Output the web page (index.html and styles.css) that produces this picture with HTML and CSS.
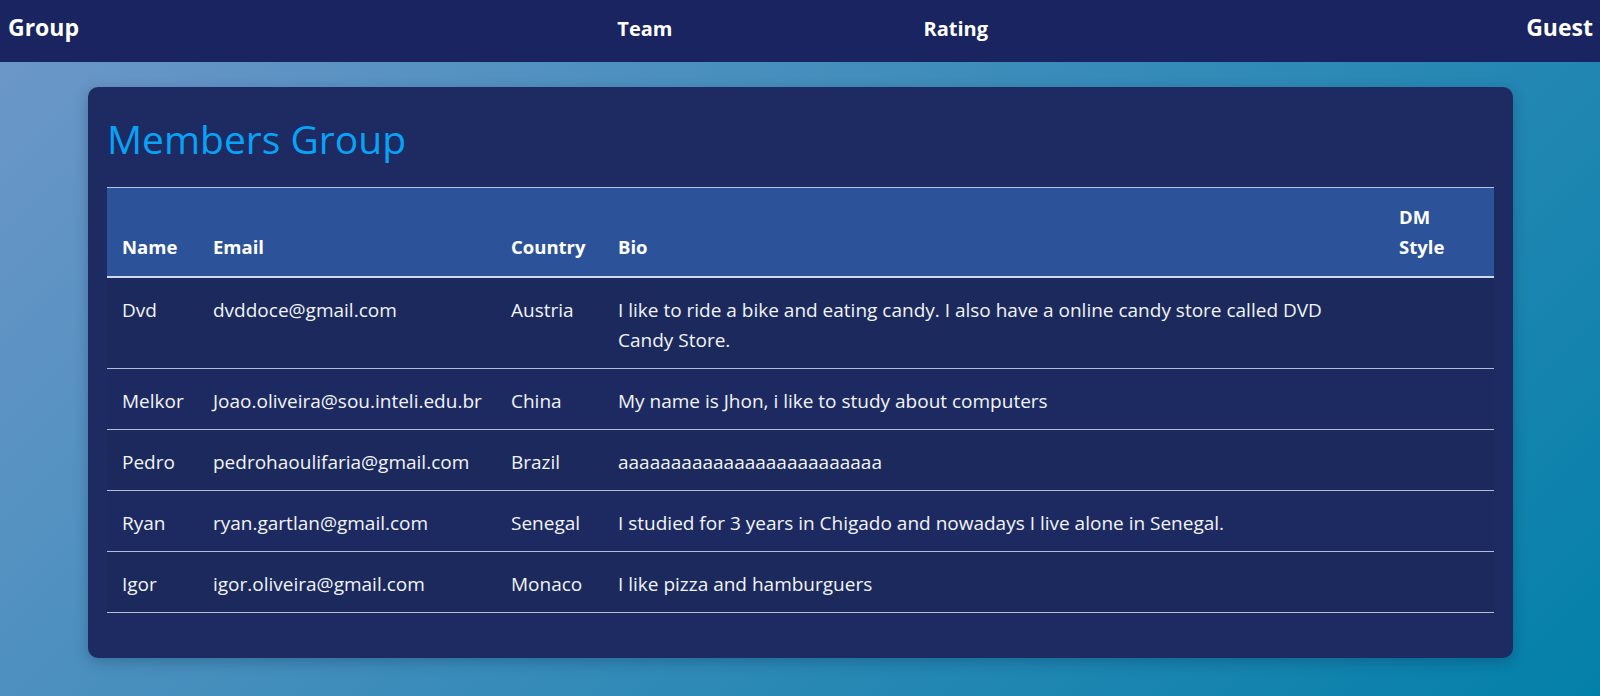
FILE: index.html
```html
<!DOCTYPE html>
<html lang="en">
<head>
<meta charset="utf-8">
<title>Members Group</title>
<link rel="stylesheet" href="styles.css">
</head>
<body>
<nav class="navbar">
  <a class="brand" href="#">Group</a>
  <ul class="nav-links">
    <li><a href="#">Team</a></li>
    <li><a href="#">Rating</a></li>
  </ul>
  <a class="user" href="#">Guest</a>
</nav>
<main class="card">
  <h1 class="title">Members Group</h1>
  <table class="members">
    <colgroup>
      <col class="c-name">
      <col class="c-email">
      <col class="c-country">
      <col class="c-bio">
      <col class="c-dm">
    </colgroup>
    <thead>
      <tr>
        <th>Name</th>
        <th>Email</th>
        <th>Country</th>
        <th>Bio</th>
        <th class="dm">DM Style</th>
      </tr>
    </thead>
    <tbody>
      <tr>
        <td>Dvd</td>
        <td>dvddoce@gmail.com</td>
        <td>Austria</td>
        <td class="bio">I like to ride a bike and eating candy. I also have a online candy store called DVD Candy Store.</td>
        <td></td>
      </tr>
      <tr>
        <td>Melkor</td>
        <td>Joao.oliveira@sou.inteli.edu.br</td>
        <td>China</td>
        <td class="bio">My name is Jhon, i like to study about computers</td>
        <td></td>
      </tr>
      <tr>
        <td>Pedro</td>
        <td>pedrohaoulifaria@gmail.com</td>
        <td>Brazil</td>
        <td class="bio">aaaaaaaaaaaaaaaaaaaaaaaaa</td>
        <td></td>
      </tr>
      <tr>
        <td>Ryan</td>
        <td>ryan.gartlan@gmail.com</td>
        <td>Senegal</td>
        <td class="bio">I studied for 3 years in Chigado and nowadays I live alone in Senegal.</td>
        <td></td>
      </tr>
      <tr>
        <td>Igor</td>
        <td>igor.oliveira@gmail.com</td>
        <td>Monaco</td>
        <td class="bio">I like pizza and hamburguers</td>
        <td></td>
      </tr>
    </tbody>
  </table>
</main>
</body>
</html>
```
FILE: styles.css
```css
* { box-sizing: border-box; }

html, body {
  margin: 0;
  padding: 0;
}

body {
  min-height: 100vh;
  font-family: "Open Sans", "Noto Sans", "Liberation Sans", sans-serif;
  color: #f2f4f8;
  background: linear-gradient(135deg, #6e97c9 0%, #0380a9 100%);
  background-attachment: fixed;
}

a { color: inherit; text-decoration: none; }

.navbar {
  height: 62px;
  background: #1a2460;
  display: flex;
  justify-content: space-between;
  align-items: baseline;
  padding: 11px 7px 0 8px;
  color: #ffffff;
  font-weight: 700;
}

.brand, .user {
  font-size: 23px;
}

.nav-links {
  list-style: none;
  margin: 0;
  padding: 0;
  display: flex;
  gap: 251px;
  font-size: 20px;
  font-weight: 700;
}

.card {
  display: block;
  margin: 25px 87px 0 88px;
  padding: 20px 19px 45px;
  background: #1e2b62;
  border-radius: 10px;
  box-shadow: 0 4px 14px rgba(0, 20, 60, 0.25);
}

.title {
  margin: 5px 0 22px;
  font-size: 39px;
  font-weight: 500;
  line-height: 53px;
  color: #08a2f6;
}

.members {
  width: 100%;
  border-collapse: collapse;
  table-layout: fixed;
  font-size: 19px;
  line-height: 30px;
}

.c-name { width: 91px; }
.c-email { width: 298px; }
.c-country { width: 107px; }
.c-dm { width: 110px; }

.members thead tr {
  background: #2c5399;
  border-top: 1px solid #b9c3dd;
  border-bottom: 2px solid #d2d9ea;
}

.members th {
  text-align: left;
  vertical-align: bottom;
  padding: 14px 15px;
  font-weight: 700;
  font-size: 18.5px;
  color: #ffffff;
}

.members th.dm {
  padding-right: 35px;
}

.members td {
  vertical-align: top;
  padding: 17px 15px 13px;
  white-space: nowrap;
}

.members td.bio {
  white-space: normal;
  padding-right: 38px;
}

.members tbody tr {
  border-bottom: 1px solid #b3bdd8;
  background: #1d2a61;
}

.members tbody tr:nth-child(odd) {
  background: #1b295d;
}
```
